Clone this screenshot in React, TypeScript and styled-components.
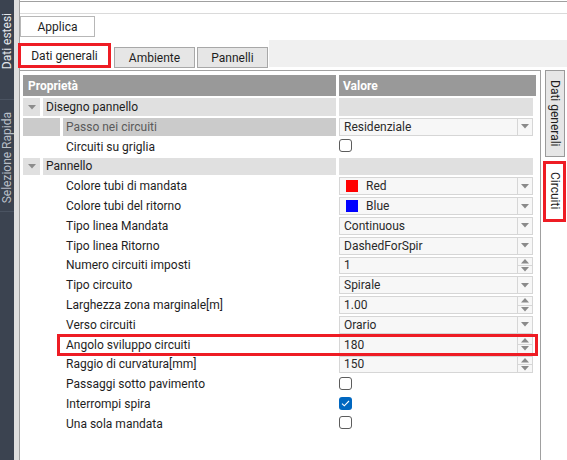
import React from 'react'
import styled, { createGlobalStyle } from 'styled-components'

const GlobalStyle = createGlobalStyle`
  html, body {
    margin: 0;
    padding: 0;
    background: #ffffff;
  }
  body {
    font-family: 'Segoe UI', Roboto, 'Noto Sans', sans-serif;
    font-size: 12px;
    color: #1e1e1e;
  }
  * {
    box-sizing: border-box;
  }
`

const RED = '#ee1c24'

const Screen = styled.div`
  display: flex;
  width: 567px;
  height: 460px;
  overflow: hidden;
  background: #ffffff;
`

const LeftDock = styled.div`
  width: 14px;
  flex-shrink: 0;
  background: #3b4350;
  display: flex;
  flex-direction: column;
`

const DockTab = styled.div<{ $height: number; $pad: number; $active?: boolean }>`
  height: ${(p) => p.$height}px;
  padding-top: ${(p) => p.$pad}px;
  display: flex;
  flex-direction: column;
  align-items: center;
  border-bottom: 1px solid #4a5361;
  color: ${(p) => (p.$active ? '#e4e7eb' : '#b9bfc7')};
`

const UpwardText = styled.span`
  writing-mode: vertical-rl;
  transform: rotate(180deg);
  line-height: 14px;
  white-space: nowrap;
`

const DownwardText = styled.span`
  writing-mode: vertical-rl;
  line-height: 14px;
  white-space: nowrap;
`

const Gutter = styled.div`
  width: 6px;
  flex-shrink: 0;
  background: #dedede;
  border-right: 1px solid #a0a0a0;
`

const Main = styled.div`
  flex: 1;
  display: flex;
  flex-direction: column;
  min-width: 0;
`

const TopEdge = styled.div`
  margin-top: 1px;
  height: 13px;
  border-top: 1px solid #a0a0a0;
  border-bottom: 1px solid #dadada;
`

const Toolbar = styled.div`
  height: 26px;
  padding-top: 2px;
  display: flex;
`

const ToolButton = styled.button`
  width: 75px;
  height: 21px;
  border: 1px solid #b7b7b7;
  background: #ffffff;
  font: inherit;
  color: #1e1e1e;
  padding: 0;
`

const TabRow = styled.div`
  height: 30px;
  display: flex;
  align-items: flex-start;
`

const Tab = styled.div<{ $active?: boolean; $width: number; $gap: number }>`
  position: relative;
  z-index: 1;
  width: ${(p) => p.$width}px;
  margin-left: ${(p) => p.$gap}px;
  margin-top: ${(p) => (p.$active ? 3 : 7)}px;
  height: ${(p) => (p.$active ? 25 : 21)}px;
  border: ${(p) => (p.$active ? `3px solid ${RED}` : '1px solid #a8a8a8')};
  background: ${(p) => (p.$active ? '#ffffff' : '#e6e6e6')};
  display: flex;
  align-items: center;
  justify-content: center;
  color: #1e1e1e;
`

const TabFiller = styled.div`
  flex: 1;
  margin-left: 1px;
  height: 27px;
  background: #f0f0f0;
`

const Body = styled.div`
  flex: 1;
  display: flex;
  min-height: 0;
`

const GridPanel = styled.div`
  width: 521px;
  flex-shrink: 0;
  border-top: 1px solid #a0a0a0;
  border-right: 1px solid #a0a0a0;
  padding: 4px 4px 0 3px;
`

const HeaderRow = styled.div`
  display: grid;
  grid-template-columns: 313px 197px;
  column-gap: 3px;
  height: 21px;
  margin-bottom: 2.2px;
`

const HeaderCell = styled.div<{ $pad: number }>`
  background: #999999;
  color: #ffffff;
  font-weight: 700;
  display: flex;
  align-items: center;
  padding-left: ${(p) => p.$pad}px;
`

const Rows = styled.div`
  display: flex;
  flex-direction: column;
  gap: 2px;
`

const Row = styled.div`
  position: relative;
  display: grid;
  grid-template-columns: 313px 194px;
  column-gap: 3px;
  height: 17.8px;
`

const Mark = styled.div`
  position: absolute;
  left: 34px;
  right: -2px;
  top: -2px;
  bottom: -2.5px;
  border: 3px solid ${RED};
  pointer-events: none;
`

const LabelSide = styled.div`
  display: flex;
  gap: 3px;
  min-width: 0;
`

const Indent = styled.div<{ $width: number; $shade?: string }>`
  width: ${(p) => p.$width}px;
  flex-shrink: 0;
  background: ${(p) => p.$shade ?? 'transparent'};
  display: flex;
  align-items: center;
  justify-content: center;
`

const LabelCell = styled.div<{ $shade?: string; $dim?: boolean }>`
  flex: 1;
  background: ${(p) => p.$shade ?? 'transparent'};
  color: ${(p) => (p.$dim ? '#5a5a5a' : '#1e1e1e')};
  padding-left: 3px;
  display: flex;
  align-items: center;
  white-space: nowrap;
  overflow: hidden;
`

const CatValue = styled.div`
  background: #e0e0e0;
`

const ValueBox = styled.div`
  display: flex;
  align-items: stretch;
  border: 1px solid #d6d6d6;
  background: #f7f7f7;
  color: #2a2a2a;
`

const ValueText = styled.div<{ $pad: number }>`
  flex: 1;
  display: flex;
  align-items: center;
  padding-left: ${(p) => p.$pad}px;
  white-space: nowrap;
`

const Swatch = styled.span<{ $color: string }>`
  align-self: center;
  width: 12px;
  height: 12px;
  margin-left: 6px;
  background: ${(p) => p.$color};
  flex-shrink: 0;
`

const DropButton = styled.div`
  width: 15px;
  border-left: 1px solid #d6d6d6;
  display: flex;
  align-items: center;
  justify-content: center;
`

const Spin = styled.div`
  width: 15px;
  display: flex;
  flex-direction: column;
  border-left: 1px solid #d6d6d6;
`

const SpinHalf = styled.div<{ $top?: boolean }>`
  flex: 1;
  display: flex;
  align-items: center;
  justify-content: center;
  border-bottom: ${(p) => (p.$top ? '1px solid #d6d6d6' : 'none')};
`

const CheckCell = styled.div`
  display: flex;
  align-items: flex-start;
  padding-top: 1.5px;
`

const CheckBox = styled.div<{ $checked?: boolean }>`
  width: 13px;
  height: 13px;
  border-radius: 3px;
  border: ${(p) => (p.$checked ? 'none' : '1.5px solid #5c5c5c')};
  background: ${(p) => (p.$checked ? '#0067c0' : '#ffffff')};
  display: flex;
  align-items: center;
  justify-content: center;
`

const RightTabs = styled.div`
  flex: 1;
  display: flex;
  flex-direction: column;
`

const SideTab = styled.div<{ $active?: boolean }>`
  margin-left: ${(p) => (p.$active ? 2 : 4)}px;
  margin-top: ${(p) => (p.$active ? 4 : 0)}px;
  width: ${(p) => (p.$active ? 23 : 20)}px;
  height: ${(p) => (p.$active ? 61 : 87)}px;
  padding-top: ${(p) => (p.$active ? 8 : 9)}px;
  border: ${(p) => (p.$active ? `3px solid ${RED}` : '1px solid #9a9a9a')};
  background: ${(p) => (p.$active ? '#ffffff' : '#e6e6e6')};
  display: flex;
  flex-direction: column;
  align-items: center;
  color: #1e1e1e;
`

const Arrow = ({ up, color = '#8a8a8a' }: { up?: boolean; color?: string }) => (
  <svg width="8" height="5" viewBox="0 0 8 5">
    <path d={up ? 'M0 4.5h8L4 0z' : 'M0 0h8L4 4.5z'} fill={color} />
  </svg>
)

const Tick = () => (
  <svg width="9" height="7" viewBox="0 0 9 7">
    <path d="M1 3.6l2.3 2.2L8 1" fill="none" stroke="#ffffff" strokeWidth="1.1" />
  </svg>
)

type Value =
  | { kind: 'combo'; text: string; swatch?: string }
  | { kind: 'spin'; text: string }
  | { kind: 'check'; checked: boolean }

type Item =
  | { kind: 'cat'; label: string }
  | { kind: 'prop'; label: string; value: Value; selected?: boolean; marked?: boolean }

const items: Item[] = [
  { kind: 'cat', label: 'Disegno pannello' },
  { kind: 'prop', label: 'Passo nei circuiti', value: { kind: 'combo', text: 'Residenziale' }, selected: true },
  { kind: 'prop', label: 'Circuiti su griglia', value: { kind: 'check', checked: false } },
  { kind: 'cat', label: 'Pannello' },
  { kind: 'prop', label: 'Colore tubi di mandata', value: { kind: 'combo', text: 'Red', swatch: '#ff0000' } },
  { kind: 'prop', label: 'Colore tubi del ritorno', value: { kind: 'combo', text: 'Blue', swatch: '#0000ff' } },
  { kind: 'prop', label: 'Tipo linea Mandata', value: { kind: 'combo', text: 'Continuous' } },
  { kind: 'prop', label: 'Tipo linea Ritorno', value: { kind: 'combo', text: 'DashedForSpir' } },
  { kind: 'prop', label: 'Numero circuiti imposti', value: { kind: 'spin', text: '1' } },
  { kind: 'prop', label: 'Tipo circuito', value: { kind: 'combo', text: 'Spirale' } },
  { kind: 'prop', label: 'Larghezza zona marginale[m]', value: { kind: 'spin', text: '1.00' } },
  { kind: 'prop', label: 'Verso circuiti', value: { kind: 'combo', text: 'Orario' } },
  { kind: 'prop', label: 'Angolo sviluppo circuiti', value: { kind: 'spin', text: '180' }, marked: true },
  { kind: 'prop', label: 'Raggio di curvatura[mm]', value: { kind: 'spin', text: '150' } },
  { kind: 'prop', label: 'Passaggi sotto pavimento', value: { kind: 'check', checked: false } },
  { kind: 'prop', label: 'Interrompi spira', value: { kind: 'check', checked: true } },
  { kind: 'prop', label: 'Una sola mandata', value: { kind: 'check', checked: false } },
]

const ValueEditor = ({ value }: { value: Value }) => {
  if (value.kind === 'check') {
    return (
      <CheckCell>
        <CheckBox $checked={value.checked}>{value.checked ? <Tick /> : null}</CheckBox>
      </CheckCell>
    )
  }
  return (
    <ValueBox>
      {value.kind === 'combo' && value.swatch ? <Swatch $color={value.swatch} /> : null}
      <ValueText $pad={value.kind === 'combo' && value.swatch ? 8 : 4}>{value.text}</ValueText>
      {value.kind === 'combo' ? (
        <DropButton>
          <Arrow />
        </DropButton>
      ) : (
        <Spin>
          <SpinHalf $top>
            <Arrow up />
          </SpinHalf>
          <SpinHalf>
            <Arrow />
          </SpinHalf>
        </Spin>
      )}
    </ValueBox>
  )
}

const PropertyRow = ({ item }: { item: Item }) => {
  if (item.kind === 'cat') {
    return (
      <Row>
        <LabelSide>
          <Indent $width={17} $shade="#e0e0e0">
            <Arrow color="#8c8c8c" />
          </Indent>
          <LabelCell $shade="#e0e0e0">{item.label}</LabelCell>
        </LabelSide>
        <CatValue />
      </Row>
    )
  }
  const shade = item.selected ? '#cbcbcb' : undefined
  return (
    <Row>
      <LabelSide>
        <Indent $width={37} $shade={shade} />
        <LabelCell $shade={shade} $dim={item.selected}>
          {item.label}
        </LabelCell>
      </LabelSide>
      <ValueEditor value={item.value} />
      {item.marked ? <Mark /> : null}
    </Row>
  )
}

export default function App() {
  return (
    <>
      <GlobalStyle />
      <Screen>
        <LeftDock>
          <DockTab $height={100} $pad={13} $active>
            <UpwardText>Dati estesi</UpwardText>
          </DockTab>
          <DockTab $height={112} $pad={12}>
            <UpwardText>Selezione Rapida</UpwardText>
          </DockTab>
        </LeftDock>
        <Gutter />
        <Main>
          <TopEdge />
          <Toolbar>
            <ToolButton>Applica</ToolButton>
          </Toolbar>
          <TabRow>
            <Tab $active $width={93} $gap={-2}>
              Dati generali
            </Tab>
            <Tab $width={81} $gap={3}>
              Ambiente
            </Tab>
            <Tab $width={71} $gap={2}>
              Pannelli
            </Tab>
            <TabFiller />
          </TabRow>
          <Body>
            <GridPanel>
              <HeaderRow>
                <HeaderCell $pad={5}>Proprietà</HeaderCell>
                <HeaderCell $pad={4}>Valore</HeaderCell>
              </HeaderRow>
              <Rows>
                {items.map((item) => (
                  <PropertyRow key={item.label} item={item} />
                ))}
              </Rows>
            </GridPanel>
            <RightTabs>
              <SideTab>
                <DownwardText>Dati generali</DownwardText>
              </SideTab>
              <SideTab $active>
                <DownwardText>Circuiti</DownwardText>
              </SideTab>
            </RightTabs>
          </Body>
        </Main>
      </Screen>
    </>
  )
}
